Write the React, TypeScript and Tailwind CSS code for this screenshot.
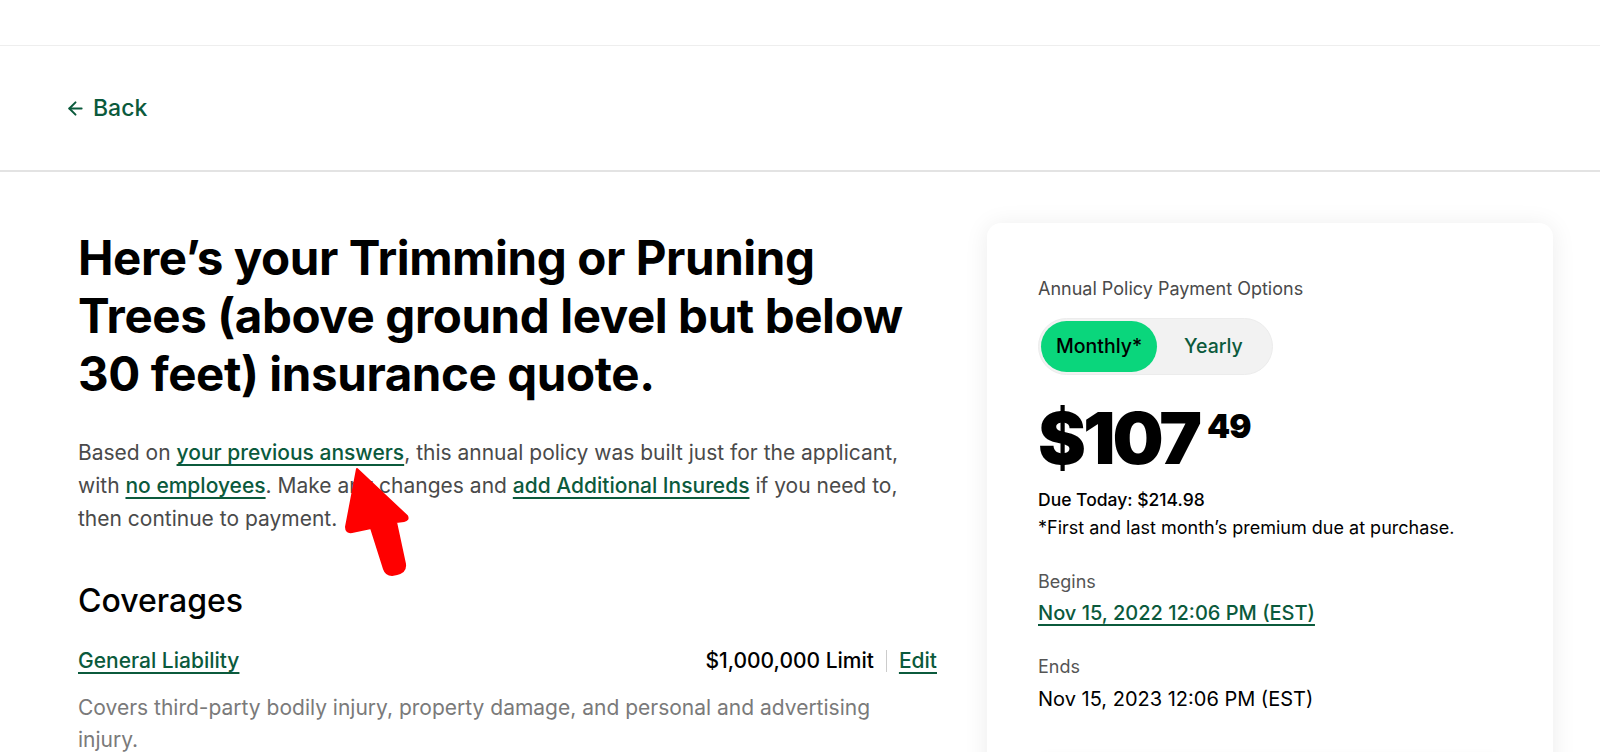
import { ArrowLeft } from 'lucide-react';

const font = { fontFamily: 'Inter, "Noto Sans", sans-serif' };

// red annotation arrow drawn over the copy
function RedArrow() {
  return (
    <svg
      className="pointer-events-none absolute left-[330px] top-[455px]"
      width="100"
      height="130"
      viewBox="330 455 100 130"
    >
      <path
        d="M357 469 L407 516 Q409 520 404 521 L396 522 L405 564 Q406 572 397 574 L392 575 Q386 575 384 569 L371 528 L352 532 Q346 533 346 527 Z"
        fill="#ff0000"
        stroke="#ff0000"
        strokeWidth="2"
        strokeLinejoin="round"
      />
    </svg>
  );
}

export default function App() {
  return (
    <div className="relative h-screen overflow-hidden bg-white text-black" style={font}>
      <div className="h-[46px] border-b border-[#eeeeee]" />
      <header className="flex h-[126px] items-center border-b-2 border-[#e3e3e3] pl-[65px]">
        <a className="flex items-center gap-[7px] text-[23px] font-medium text-[#0b5a3c]">
          <ArrowLeft size={21} strokeWidth={2.3} />
          Back
        </a>
      </header>

      <main className="flex justify-between pl-[78px] pr-[47px] pt-[51px]">
        <section className="w-[859px] pt-[6px]">
          <h1 className="w-[850px] text-[47.5px] font-bold leading-[58px] tracking-[-0.4px]">
            Here’s your Trimming or Pruning Trees (above ground level but below 30 feet) insurance quote.
          </h1>
          <p className="mt-[33px] w-[840px] text-[21px] leading-[33px] text-[#4a4a4a]">
            Based on{' '}
            <a className="font-medium text-[#0b5a3c] underline underline-offset-[4px]">your previous answers</a>,
            this annual policy was built just for the applicant, with{' '}
            <a className="font-medium text-[#0b5a3c] underline underline-offset-[4px]">no employees</a>. Make any
            changes and{' '}
            <a className="font-medium text-[#0b5a3c] underline underline-offset-[4px]">add Additional Insureds</a> if
            you need to, then continue to payment.
          </p>

          <h2 className="mt-[46px] text-[32px] font-medium leading-[40px]">Coverages</h2>

          <div className="mt-[26px] flex items-center justify-between text-[21px] leading-[28px]">
            <a className="font-medium text-[#0b5a3c] underline underline-offset-[4px]">General Liability</a>
            <div className="flex items-center">
              <span className="font-medium">$1,000,000 Limit</span>
              <span className="mx-[12px] h-[22px] w-px bg-[#cccccc]" />
              <a className="font-medium text-[#0b5a3c] underline underline-offset-[4px]">Edit</a>
            </div>
          </div>
          <p className="mt-[17px] w-[830px] text-[21px] leading-[32px] text-[#7a7a7a]">
            Covers third-party bodily injury, property damage, and personal and advertising injury.
          </p>
        </section>

        <aside className="h-[600px] w-[566px] shrink-0 rounded-[14px] bg-white px-[51px] pt-[55px] shadow-[0_2px_24px_rgba(0,0,0,0.08)]">
          <div className="text-[18px] leading-[22px] text-[#4a4a4a]">Annual Policy Payment Options</div>
          <div className="mt-[18px] inline-flex h-[57px] items-center rounded-full border border-[#ececec] bg-[#f2f2f2] p-[2px]">
            <span className="flex h-full items-center rounded-full bg-[#0ad67c] px-[15px] text-[19.5px] font-medium">
              Monthly*
            </span>
            <span className="flex h-full items-center px-[27px] text-[19.5px] font-medium text-[#0b5a3c]">
              Yearly
            </span>
          </div>
          <div className="mt-[25px] flex items-start">
            <span className="text-[72px] font-black leading-[76px] tracking-[-3px]">$107</span>
            <span className="ml-[8px] mt-[8px] text-[33px] font-black leading-[36px] tracking-[-1px]">49</span>
          </div>
          <div className="mt-[13px] text-[17.5px] font-medium leading-[22px]">Due Today: $214.98</div>
          <div className="mt-[6px] text-[18px] leading-[22px]">*First and last month’s premium due at purchase.</div>

          <div className="mt-[31px] text-[18px] leading-[24px] text-[#555555]">Begins</div>
          <a className="mt-[5px] block text-[20px] font-medium leading-[28px] text-[#0b5a3c] underline underline-offset-[4px]">
            Nov 15, 2022 12:06 PM (EST)
          </a>
          <div className="mt-[28px] text-[18px] leading-[24px] text-[#555555]">Ends</div>
          <div className="mt-[6px] text-[20px] leading-[28px]">Nov 15, 2023 12:06 PM (EST)</div>
          <div className="mt-[44px] h-[40px] rounded-t-[10px] shadow-[0_-2px_10px_rgba(0,0,0,0.04)]" />
        </aside>
      </main>
      <RedArrow />
    </div>
  );
}
